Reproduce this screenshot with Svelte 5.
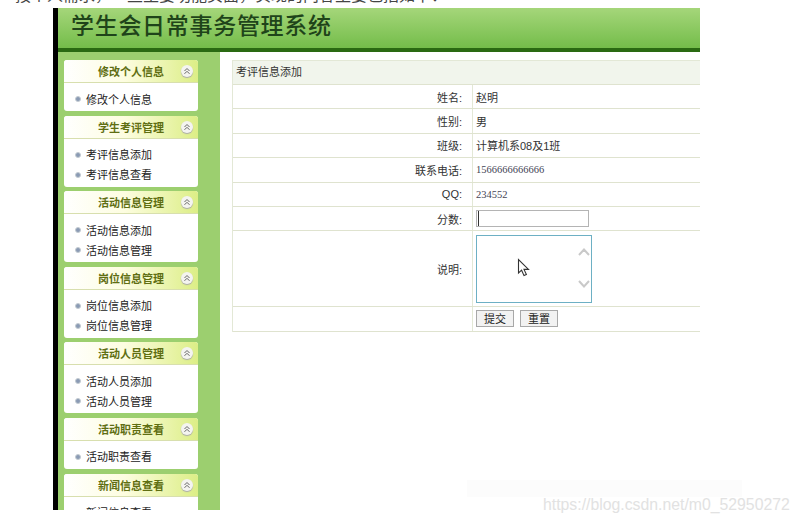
<script>
	const menus = [
		{ title: '修改个人信息', items: ['修改个人信息'] },
		{ title: '学生考评管理', items: ['考评信息添加', '考评信息查看'] },
		{ title: '活动信息管理', items: ['活动信息添加', '活动信息管理'] },
		{ title: '岗位信息管理', items: ['岗位信息添加', '岗位信息管理'] },
		{ title: '活动人员管理', items: ['活动人员添加', '活动人员管理'] },
		{ title: '活动职责查看', items: ['活动职责查看'] },
		{ title: '新闻信息查看', items: ['新闻信息查看'] }
	];

	const rows = [
		{ label: '姓名:', value: '赵明' },
		{ label: '性别:', value: '男' },
		{ label: '班级:', value: '计算机系08及1班' },
		{ label: '联系电话:', value: '1566666666666', num: true },
		{ label: 'QQ:', value: '234552', num: true }
	];
</script>

<div class="page">
	<p class="intro">按个人需求，一些主要功能页面，实现的内容主要包括如下：</p>
	<div class="frame">
		<header class="banner"><h1>学生会日常事务管理系统</h1></header>
		<div class="columns">
			<aside class="sidebar">
				{#each menus as menu}
					<section class="menu">
						<div class="menu-head">
							<span class="menu-title">{menu.title}</span>
							<span class="chevron">
								<svg width="8" height="8" viewBox="0 0 8 8">
									<path d="M1.500 4 4 1.500 6.500 4M1.500 6.800 4 4.300 6.500 6.800" fill="none" stroke="#666" stroke-width="1" />
								</svg>
							</span>
						</div>
						<ul>
							{#each menu.items as item}
								<li>{item}</li>
							{/each}
						</ul>
					</section>
				{/each}
			</aside>
			<main class="content">
				<div class="table">
					<div class="table-title">考评信息添加</div>
					{#each rows as row}
						<div class="row">
							<div class="label">{row.label}</div>
							<div class="value" class:num={row.num}>{row.value}</div>
						</div>
					{/each}
					<div class="row">
						<div class="label">分数:</div>
						<div class="value"><input type="text" class="score" /></div>
					</div>
					<div class="row tall">
						<div class="label">说明:</div>
						<div class="value">
							<div class="textarea">
								<svg class="cursor" width="14" height="20" viewBox="0 0 14 20">
									<path d="M1.500 1.500V15L4.600 12.200 7 17.600 9.400 16.500 7 11.400H11.500Z" fill="#fff" stroke="#333" stroke-width="1.100" />
								</svg>
								<svg class="scroll" width="14" height="44" viewBox="0 0 14 44">
									<path d="M2 9 7 3.500 12 9M2 35 7 40.500 12 35" fill="none" stroke="#c9c9c9" stroke-width="2" />
								</svg>
							</div>
						</div>
					</div>
					<div class="row buttons">
						<div class="label"></div>
						<div class="value">
							<button>提交</button>
							<button>重置</button>
						</div>
					</div>
				</div>
			</main>
		</div>
	</div>
	<div class="smudge"></div>
	<div class="watermark">https://blog.csdn.net/m0_52950272</div>
</div>

<style>
	:global(body) {
		margin: 0;
		background: #fff;
	}

	.page {
		position: relative;
		width: 800px;
		height: 523px;
		overflow: hidden;
		padding-top: 8px;
		box-sizing: border-box;
		font-family: 'Liberation Sans', 'Noto Sans CJK SC', sans-serif;
	}

	.intro {
		position: absolute;
		top: -12px;
		left: 15px;
		margin: 0;
		font-size: 16px;
		line-height: 16px;
		color: #444;
		white-space: nowrap;
	}

	.frame {
		width: 642px;
		height: 502px;
		margin-left: 53px;
		border-left: 5px solid #000;
		overflow: hidden;
	}

	.banner {
		height: 40px;
		background: linear-gradient(#a5d67a, #74bd4a);
		border-bottom: 4px solid #2a6a12;
	}

	h1 {
		margin: 0;
		padding: 0 0 0 13px;
		font-family: 'Noto Sans CJK SC', serif;
		font-size: 23px;
		font-weight: 500;
		line-height: 32px;
		color: #1f441a;
		letter-spacing: 0.700px;
	}

	.columns {
		display: flex;
		height: 458px;
	}

	.sidebar {
		width: 162px;
		flex: none;
		background: #9ccf6f;
		padding: 8px 22px 0 6px;
		box-sizing: border-box;
	}

	.menu {
		margin-bottom: 4.600px;
		background: #fff;
		border-radius: 3px;
	}

	.menu-head {
		display: flex;
		align-items: center;
		justify-content: flex-end;
		height: 22px;
		padding-right: 5px;
		background: linear-gradient(90deg, #fff 0%, #fdfde0 45%, #dcee86 100%);
		border-bottom: 1px solid #d8dfae;
		border-radius: 3px 3px 0 0;
	}

	.menu-title {
		margin-right: 17px;
		font-size: 11px;
		font-weight: 700;
		color: #5f6e12;
	}

	.chevron {
		display: flex;
		align-items: center;
		justify-content: center;
		width: 12px;
		height: 12px;
		border-radius: 50%;
		background: #f4f4f0;
		box-shadow: 0 1px 1px #aaa;
	}

	ul {
		list-style: none;
		margin: 0;
		padding: 6.500px 0 0 11px;
	}

	li {
		position: relative;
		height: 20px;
		padding-left: 11px;
		font-size: 11px;
		line-height: 20px;
		color: #222;
	}

	li:last-child {
		height: 21.500px;
	}

	li::before {
		content: '';
		position: absolute;
		left: 0;
		top: 6.500px;
		width: 6px;
		height: 6px;
		border-radius: 50%;
		background: #8a9ab4;
		border: 1px solid #c4ccd2;
		box-sizing: border-box;
	}

	.content {
		flex: 1;
		padding: 8px 0 0 12px;
		background: #fff;
		overflow: hidden;
	}

	.table {
		border-left: 1px solid #e3e8d6;
		font-size: 11px;
		color: #333;
	}

	.table-title {
		height: 23px;
		line-height: 23px;
		padding-left: 3px;
		background: #f1f5ec;
		border-top: 1px solid #e3e8d6;
		border-bottom: 1px solid #dfe3cf;
	}

	.row {
		display: flex;
		height: 23.400px;
		border-bottom: 1px solid #dfe3cf;
	}

	.row.tall {
		height: 74.500px;
	}

	.row.buttons {
		height: 24px;
	}

	.label {
		width: 240px;
		flex: none;
		padding-right: 10px;
		box-sizing: border-box;
		border-right: 1px solid #e3e8d6;
		text-align: right;
		align-self: stretch;
		display: flex;
		align-items: center;
		justify-content: flex-end;
	}

	.value {
		display: flex;
		align-items: center;
		gap: 6px;
		padding-left: 3px;
	}

	.value.num {
		font-family: 'Liberation Serif', serif;
		font-size: 10.500px;
		color: #445;
	}

	.score {
		width: 113px;
		height: 17px;
		margin: 0;
		padding: 0;
		box-sizing: border-box;
		border: 1px solid #b4b4b4;
		background: linear-gradient(90deg, #333 1px, #fff 1px) 1px 0 no-repeat;
	}

	.textarea {
		position: relative;
		width: 116px;
		height: 68px;
		box-sizing: border-box;
		border: 1px solid #6db0c4;
		background: #fff;
	}

	.cursor {
		position: absolute;
		left: 40px;
		top: 22px;
	}

	.scroll {
		position: absolute;
		right: 0;
		top: 10px;
	}

	button {
		width: 38px;
		height: 17px;
		margin: 0;
		padding: 0;
		border: 1px solid #a8a8a8;
		background: #f2f2f2;
		font-family: inherit;
		font-size: 11px;
		line-height: 14px;
		color: #222;
	}

	.smudge {
		position: absolute;
		left: 467px;
		top: 480px;
		width: 275px;
		height: 17px;
		background: #fcfcfc;
	}

	.watermark {
		position: absolute;
		left: 543px;
		top: 496px;
		font-size: 15.800px;
		color: #e2e2e2;
	}
</style>
